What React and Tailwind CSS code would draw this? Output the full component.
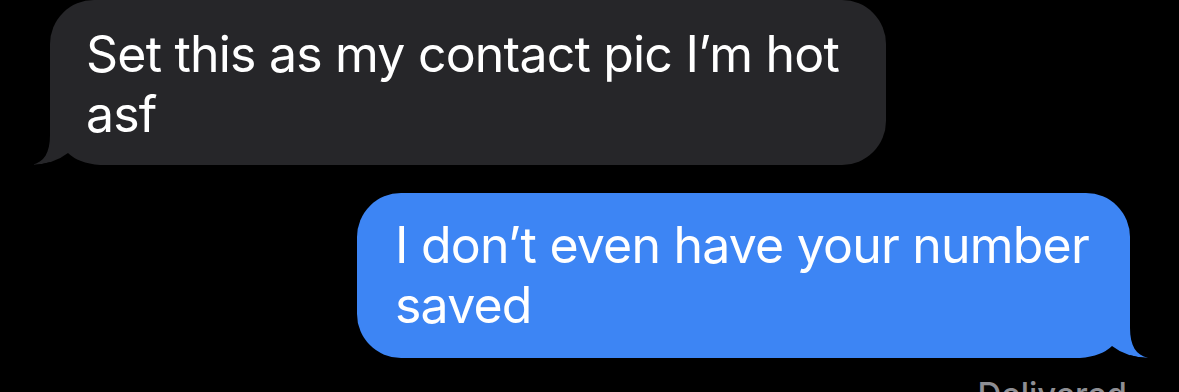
export default function App() {
  const font = { fontFamily: "Inter, 'Noto Sans', sans-serif" };
  return (
    <div className="w-[1179px] h-[392px] bg-black overflow-hidden flex flex-col" style={font}>
      <div className="flex pl-[50px]">
        <div className="relative w-[836px] h-[165px] bg-[#262629] rounded-tl-[44px] rounded-tr-[44px] rounded-br-[44px] pl-[36px] pt-[24px]">
          <svg className="absolute left-[-18px] bottom-0" width="70" height="50" viewBox="0 0 70 50">
            <path d="M18,0 L18,20 C18,38 12,47 0,50 Q22,49 36,38 L36,0 Z" fill="#262629" />
            <path d="M0,50 Q22,49 36,38 Q46,48 68,50 L68,51 L0,51 Z" fill="#000" />
          </svg>
          <p className="relative text-white text-[50px] leading-[60px] tracking-[-0.8px]">
            Set this as my contact pic I’m hot
            <br />
            asf
          </p>
        </div>
      </div>
      <div className="flex justify-end pr-[49px] mt-[28px]">
        <div className="relative w-[773px] h-[165px] bg-[#3d85f4] rounded-tl-[44px] rounded-tr-[44px] rounded-bl-[44px] pl-[38px] pt-[22px]">
          <svg className="absolute right-[-18px] bottom-0 -scale-x-100" width="70" height="50" viewBox="0 0 70 50">
            <path d="M18,0 L18,20 C18,38 12,47 0,50 Q22,49 36,38 L36,0 Z" fill="#3d85f4" />
            <path d="M0,50 Q22,49 36,38 Q46,48 68,50 L68,51 L0,51 Z" fill="#000" />
          </svg>
          <p className="relative text-white text-[50px] leading-[60px] tracking-[-0.8px]">
            I don’t even have your number
            <br />
            saved
          </p>
        </div>
      </div>
      <div className="flex justify-end pr-[52px] mt-[20px]">
        <span className="text-[#8e8e93] text-[33px] leading-[33px] font-medium">Delivered</span>
      </div>
    </div>
  );
}
